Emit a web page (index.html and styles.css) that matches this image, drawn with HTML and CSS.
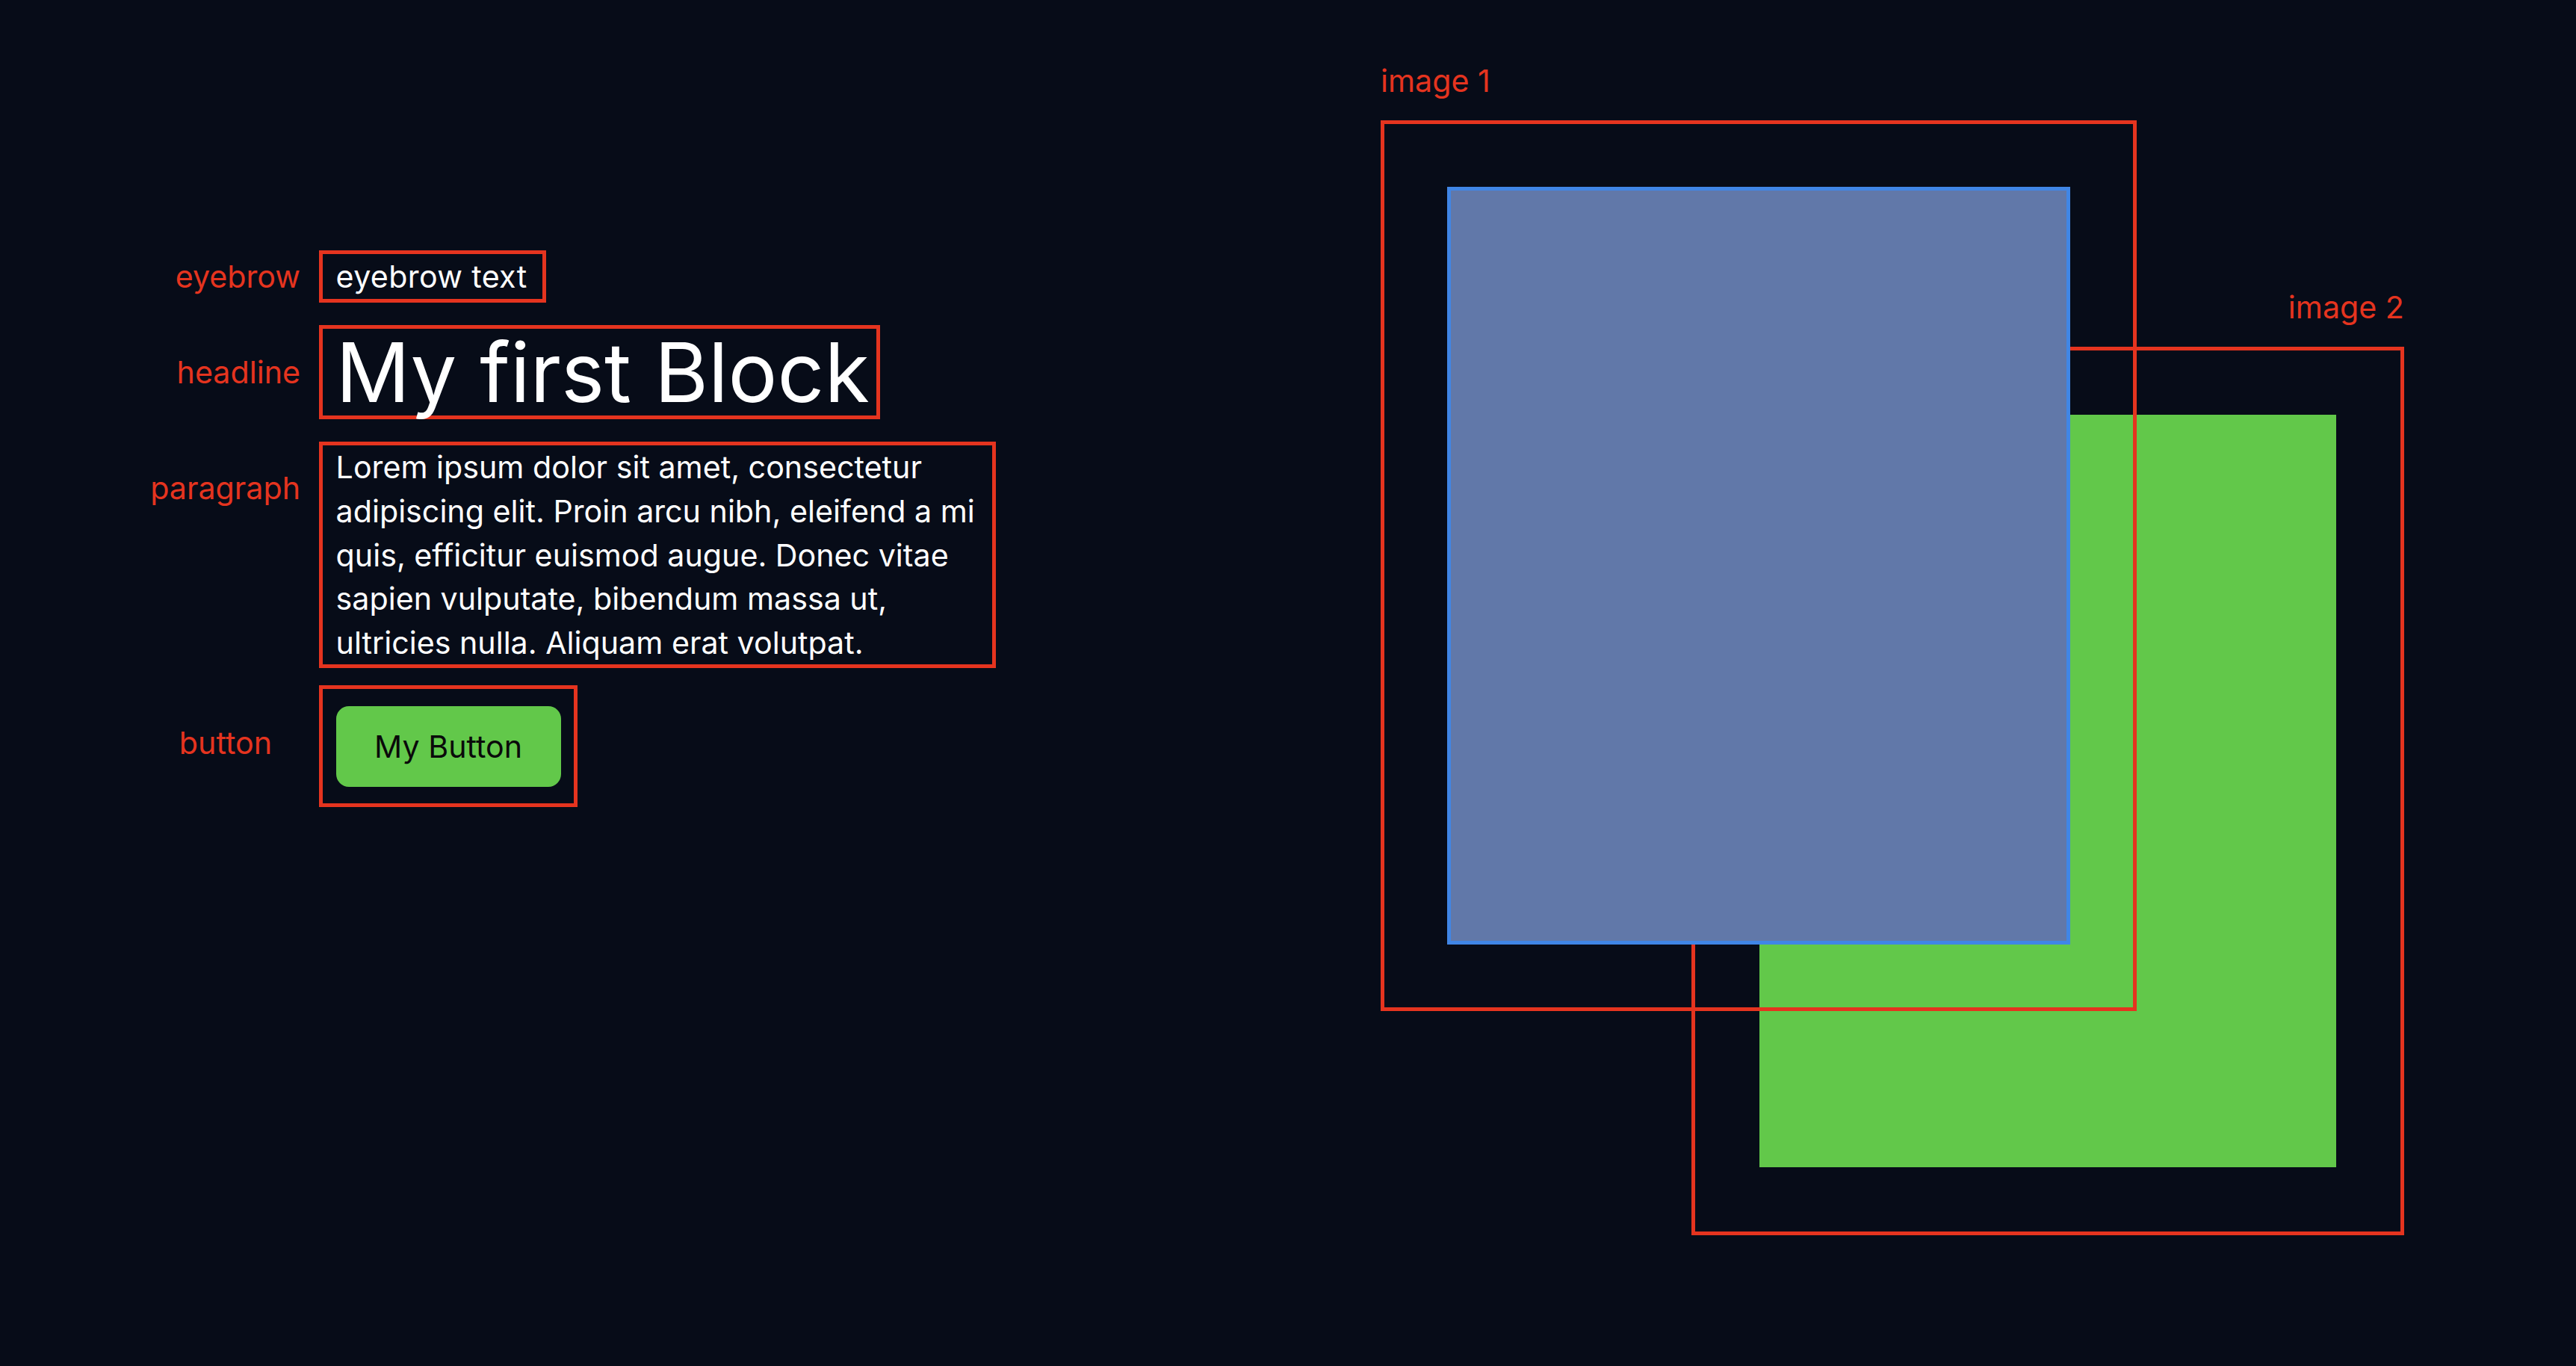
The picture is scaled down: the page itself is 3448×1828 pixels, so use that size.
FILE: index.html
```html
<!DOCTYPE html>
<html lang="en">
<head>
<meta charset="utf-8">
<title>My first Block</title>
<link rel="stylesheet" href="styles.css">
</head>
<body>
<main class="stage">
  <section class="content">
    <div class="label label-eyebrow">eyebrow</div>
    <div class="box box-eyebrow">eyebrow text</div>

    <div class="label label-headline">headline</div>
    <h1 class="box box-headline">My first Block</h1>

    <div class="label label-paragraph">paragraph</div>
    <p class="box box-paragraph">Lorem ipsum dolor sit amet, consectetur adipiscing elit. Proin arcu nibh, eleifend a mi quis, efficitur euismod augue. Donec vitae sapien vulputate, bibendum massa ut, ultricies nulla. Aliquam erat volutpat.</p>

    <div class="label label-button">button</div>
    <div class="box box-button"><button class="btn" type="button">My Button</button></div>
  </section>

  <section class="media">
    <figure class="figure figure-one">
      <figcaption class="label figure-label">image 1</figcaption>
      <div class="frame frame-one"><div class="picture picture-blue"></div></div>
    </figure>
    <figure class="figure figure-two">
      <figcaption class="label figure-label">image 2</figcaption>
      <div class="frame frame-two"><div class="picture picture-green"></div></div>
    </figure>
  </section>
</main>
</body>
</html>
```

FILE: styles.css
```css
* { box-sizing: border-box; }

html, body {
  margin: 0;
  padding: 0;
  background: #070c18;
}

body {
  width: 3448px;
  height: 1828px;
  overflow: hidden;
  font-family: Inter, "Noto Sans", "Liberation Sans", sans-serif;
  font-size: 41.2px;
  line-height: 59.4px;
  color: #ffffff;
}

.stage {
  display: grid;
  grid-template-columns: 1848px 1370px;
  align-items: start;
}

/* ---------- left: annotated content ---------- */
.content {
  display: grid;
  grid-template-columns: 212px auto;
  column-gap: 25px;
  row-gap: 30px;
  padding: 335px 0 0 190px;
  justify-content: start;
  align-items: start;
}

.label {
  color: #e5341f;
  font-size: 41.2px;
  line-height: 59.4px;
  white-space: nowrap;
}

.label-eyebrow,
.label-headline,
.label-paragraph {
  justify-self: end;
}

.label-eyebrow { align-self: center; }
.label-headline { align-self: center; }
.label-paragraph { margin-top: 33px; }
.label-button {
  justify-self: end;
  align-self: center;
  padding-right: 38px;
  margin-bottom: 8px;
  margin-top: -7px;
}

.box {
  margin: 0;
  border: 5px solid #e5341f;
  padding: 0 17.6px;
  justify-self: start;
  font-weight: 400;
}

.box-eyebrow {
  font-size: 41.2px;
  line-height: 59.4px;
  letter-spacing: 0.35px;
  padding: 1px 20px 0 17.6px;
}

.box-headline {
  font-size: 110px;
  line-height: 116px;
  font-weight: 400;
  padding-right: 9px;
}

.box-paragraph {
  width: 906px;
  padding-right: 12px;
  font-size: 41.2px;
  line-height: 58.6px;
}

.box-button {
  padding: 23px 17.6px 22px;
  margin-top: -7px;
  line-height: 0;
}

.btn {
  display: inline-block;
  border: 0;
  margin: 0;
  background: #62c84a;
  color: #0a0a0a;
  font-family: inherit;
  font-size: 41.2px;
  line-height: 59.4px;
  padding: 24.2px 51.5px;
  border-radius: 17px;
  cursor: pointer;
}

/* ---------- right: overlapping image frames ---------- */
.media {
  position: relative;
  width: 1370px;
  height: 1574px;
  margin-top: 79px;
}

.figure {
  position: absolute;
  margin: 0;
  display: flex;
  flex-direction: column;
}

.figure-label {
  margin-bottom: 22.6px;
}

.figure-one {
  left: 0;
  top: 0;
  z-index: 2;
  align-items: flex-start;
}

.figure-two {
  right: 0;
  top: 303px;
  z-index: 1;
  align-items: flex-end;
}

.frame {
  border: 5px solid #e5341f;
}

.frame-one { padding: 84px; }
.frame-two { padding: 86px; }

.picture-blue {
  width: 834px;
  height: 1014px;
  background: #6178a9;
  border: 5px solid #4086e6;
}

.picture-green {
  width: 772px;
  height: 1007px;
  background: #62c84a;
}
```
